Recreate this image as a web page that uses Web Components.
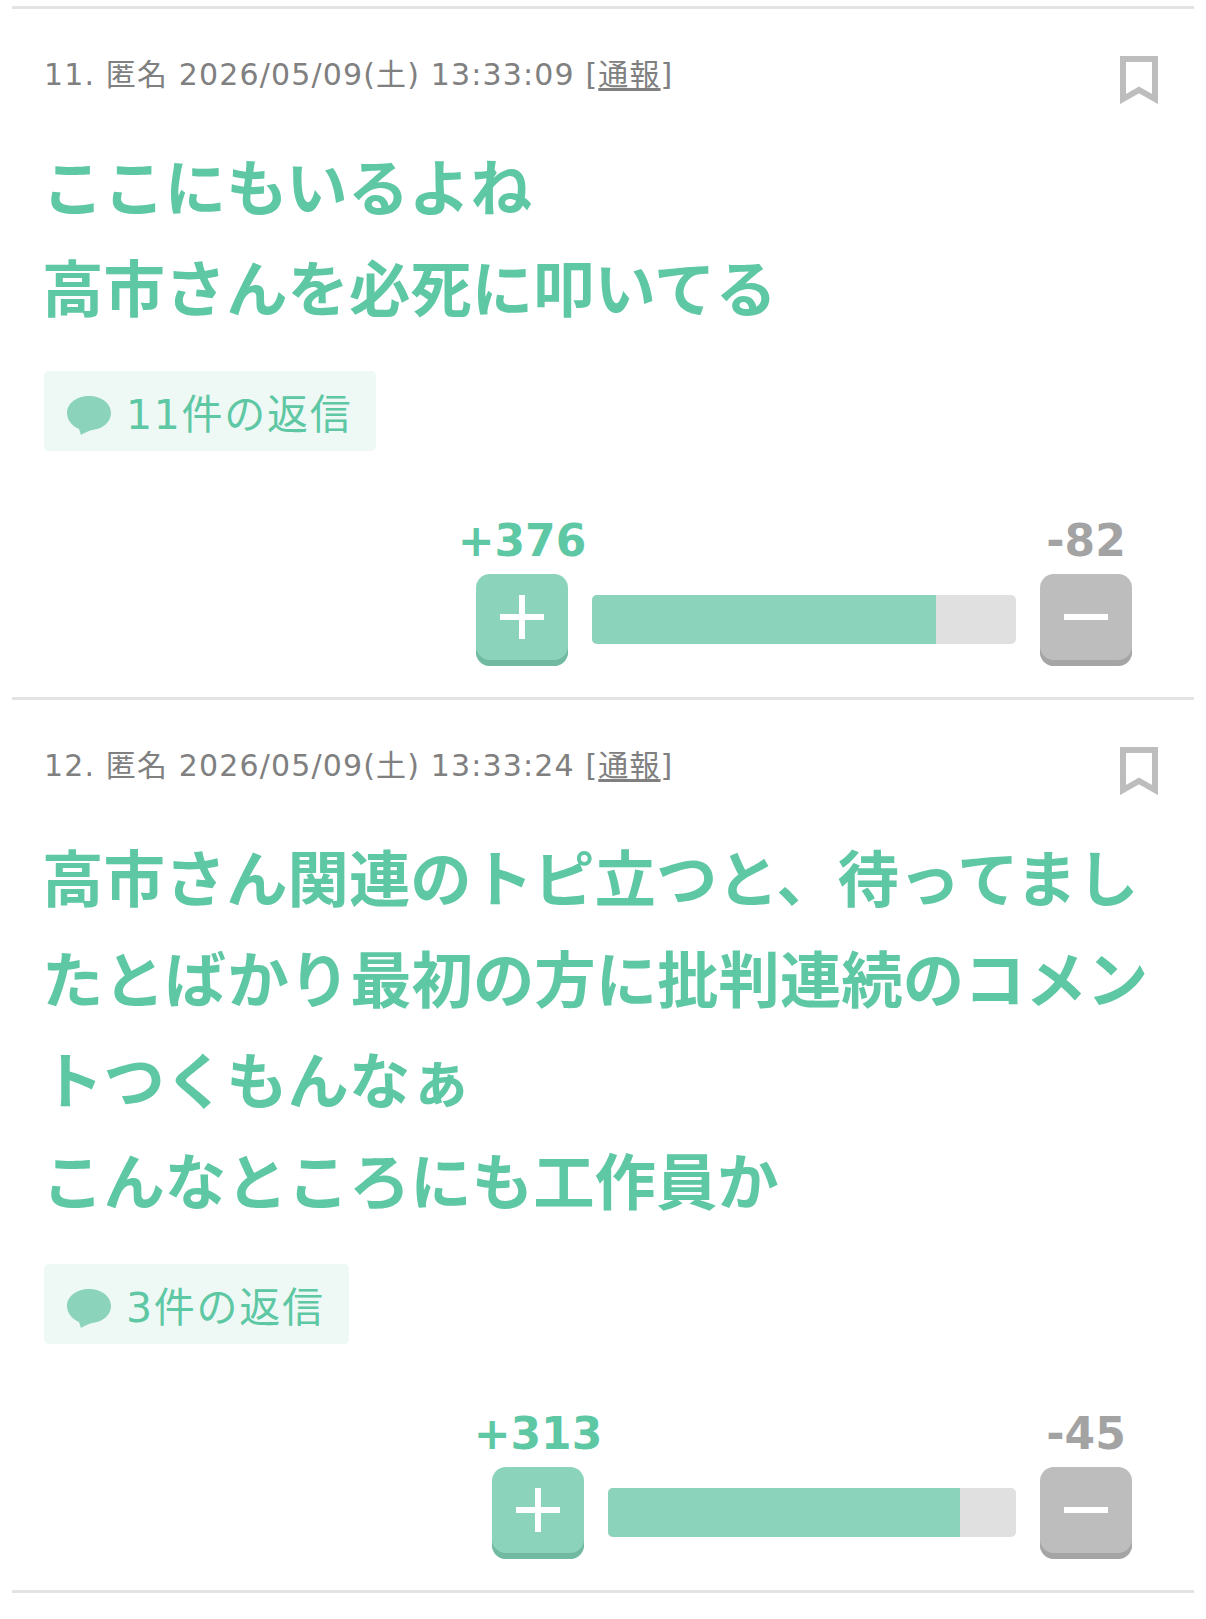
<!DOCTYPE html>
<html lang="ja"><head><meta charset="utf-8">
<style>html,body{margin:0;background:#fff}body{font-family:"DejaVu Sans","Noto Sans CJK JP",sans-serif}</style>
</head><body>
<comment-list>
<comment-item num="11." time="2026/05/09(土) 13:33:09" replies="11件の返信" plus="+376" minus="-82" track="424" fill="344">ここにもいるよね<br>高市さんを必死に叩いてる</comment-item>
<comment-item num="12." time="2026/05/09(土) 13:33:24" replies="3件の返信" plus="+313" minus="-45" track="408" fill="352">高市さん関連のトピ立つと、待ってましたとばかり最初の方に批判連続のコメントつくもんなぁ<br>こんなところにも工作員か</comment-item>
</comment-list>
<script>
customElements.define('comment-list',class extends HTMLElement{constructor(){super();this.attachShadow({mode:'open'}).innerHTML=`<style>:host{display:block;padding:6px 12px 0;border-bottom:0}::slotted(:last-child){border-bottom:3px solid #e3e3e3}</style><slot></slot>`}});
customElements.define('vote-bar',class extends HTMLElement{constructor(){super();const a=k=>this.getAttribute(k);this.attachShadow({mode:'open'}).innerHTML=`<style>
:host{display:flex;justify-content:flex-end;align-items:flex-end;gap:24px;margin-top:123px;padding-right:62px}
.c{position:relative;width:92px;height:92px;flex:none}
.n{position:absolute;left:50%;transform:translateX(-50%);top:-58px;font:bold 44px/50px "DejaVu Sans",sans-serif;white-space:nowrap}
.b{display:flex;align-items:center;justify-content:center;width:92px;height:92px;box-sizing:border-box;border-radius:14px;padding-bottom:6px}
.p .n{color:#5ec7a3}.m .n{color:#a3a3a3}
.p .b{background:#8bd3bb;box-shadow:inset 0 -6px 0 #72b9a2}.m .b{background:#bdbdbd;box-shadow:inset 0 -6px 0 #a5a5a5}
.t{height:49px;width:${a('track')}px;background:#e0e0e0;border-radius:5px;overflow:hidden;margin-bottom:22px}
.f{height:100%;width:${a('fill')}px;background:#8bd3bb}
svg{display:block}
</style>
<div class="c p"><div class="n">${a('plus')}</div><div class="b"><svg width="44" height="44" viewBox="0 0 44 44"><path d="M22 0v44M0 22h44" stroke="#fff" stroke-width="6"/></svg></div></div>
<div class="t"><div class="f"></div></div>
<div class="c m"><div class="n">${a('minus')}</div><div class="b"><svg width="44" height="44" viewBox="0 0 44 44"><path d="M0 22h44" stroke="#fff" stroke-width="6"/></svg></div></div>`}});
customElements.define('comment-item',class extends HTMLElement{constructor(){super();const a=k=>this.getAttribute(k);this.attachShadow({mode:'open'}).innerHTML=`<style>
:host{display:block;border-top:3px solid #e3e3e3;padding:44px 0 31px 32px;position:relative}
.meta{font-size:30px;line-height:44px;letter-spacing:1.15px;color:#808080;white-space:nowrap}
.meta u{text-underline-offset:3px}
.bm{position:absolute;right:36px;top:47px}
.body{margin-top:42px;font-size:61.4px;line-height:101px;font-weight:700;color:#5ec7a3;padding-right:24px;margin-left:-2px}
.r{display:inline-flex;align-items:center;gap:15px;margin-top:30px;height:80px;padding:0 24px 0 23px;background:#eef9f5;border-radius:5px;font-size:41px;letter-spacing:1.7px;color:#5ec7a3}
.r svg{margin-top:10px}
svg{display:block}
</style>
<div class="meta">${a('num')} 匿名 ${a('time')} [<u>通報</u>]</div>
<svg class="bm" width="38" height="48" viewBox="0 0 38 48"><path d="M3 3h32v40L19 34 3 43z" fill="none" stroke="#bdbdbd" stroke-width="6"/></svg>
<div class="body"><slot></slot></div>
<div class="r"><svg width="44" height="40" viewBox="0 0 44 40"><path d="M22 0c12 0 22 7 22 17 0 9-8 16-19 17-4 1-8 3-11 5l-2-6C5 30 0 24 0 17 0 7 10 0 22 0z" fill="#8bd3bb"/></svg><span>${a('replies')}</span></div>
<vote-bar plus="${a('plus')}" minus="${a('minus')}" track="${a('track')}" fill="${a('fill')}"></vote-bar>`}});
</script>
</body></html>
